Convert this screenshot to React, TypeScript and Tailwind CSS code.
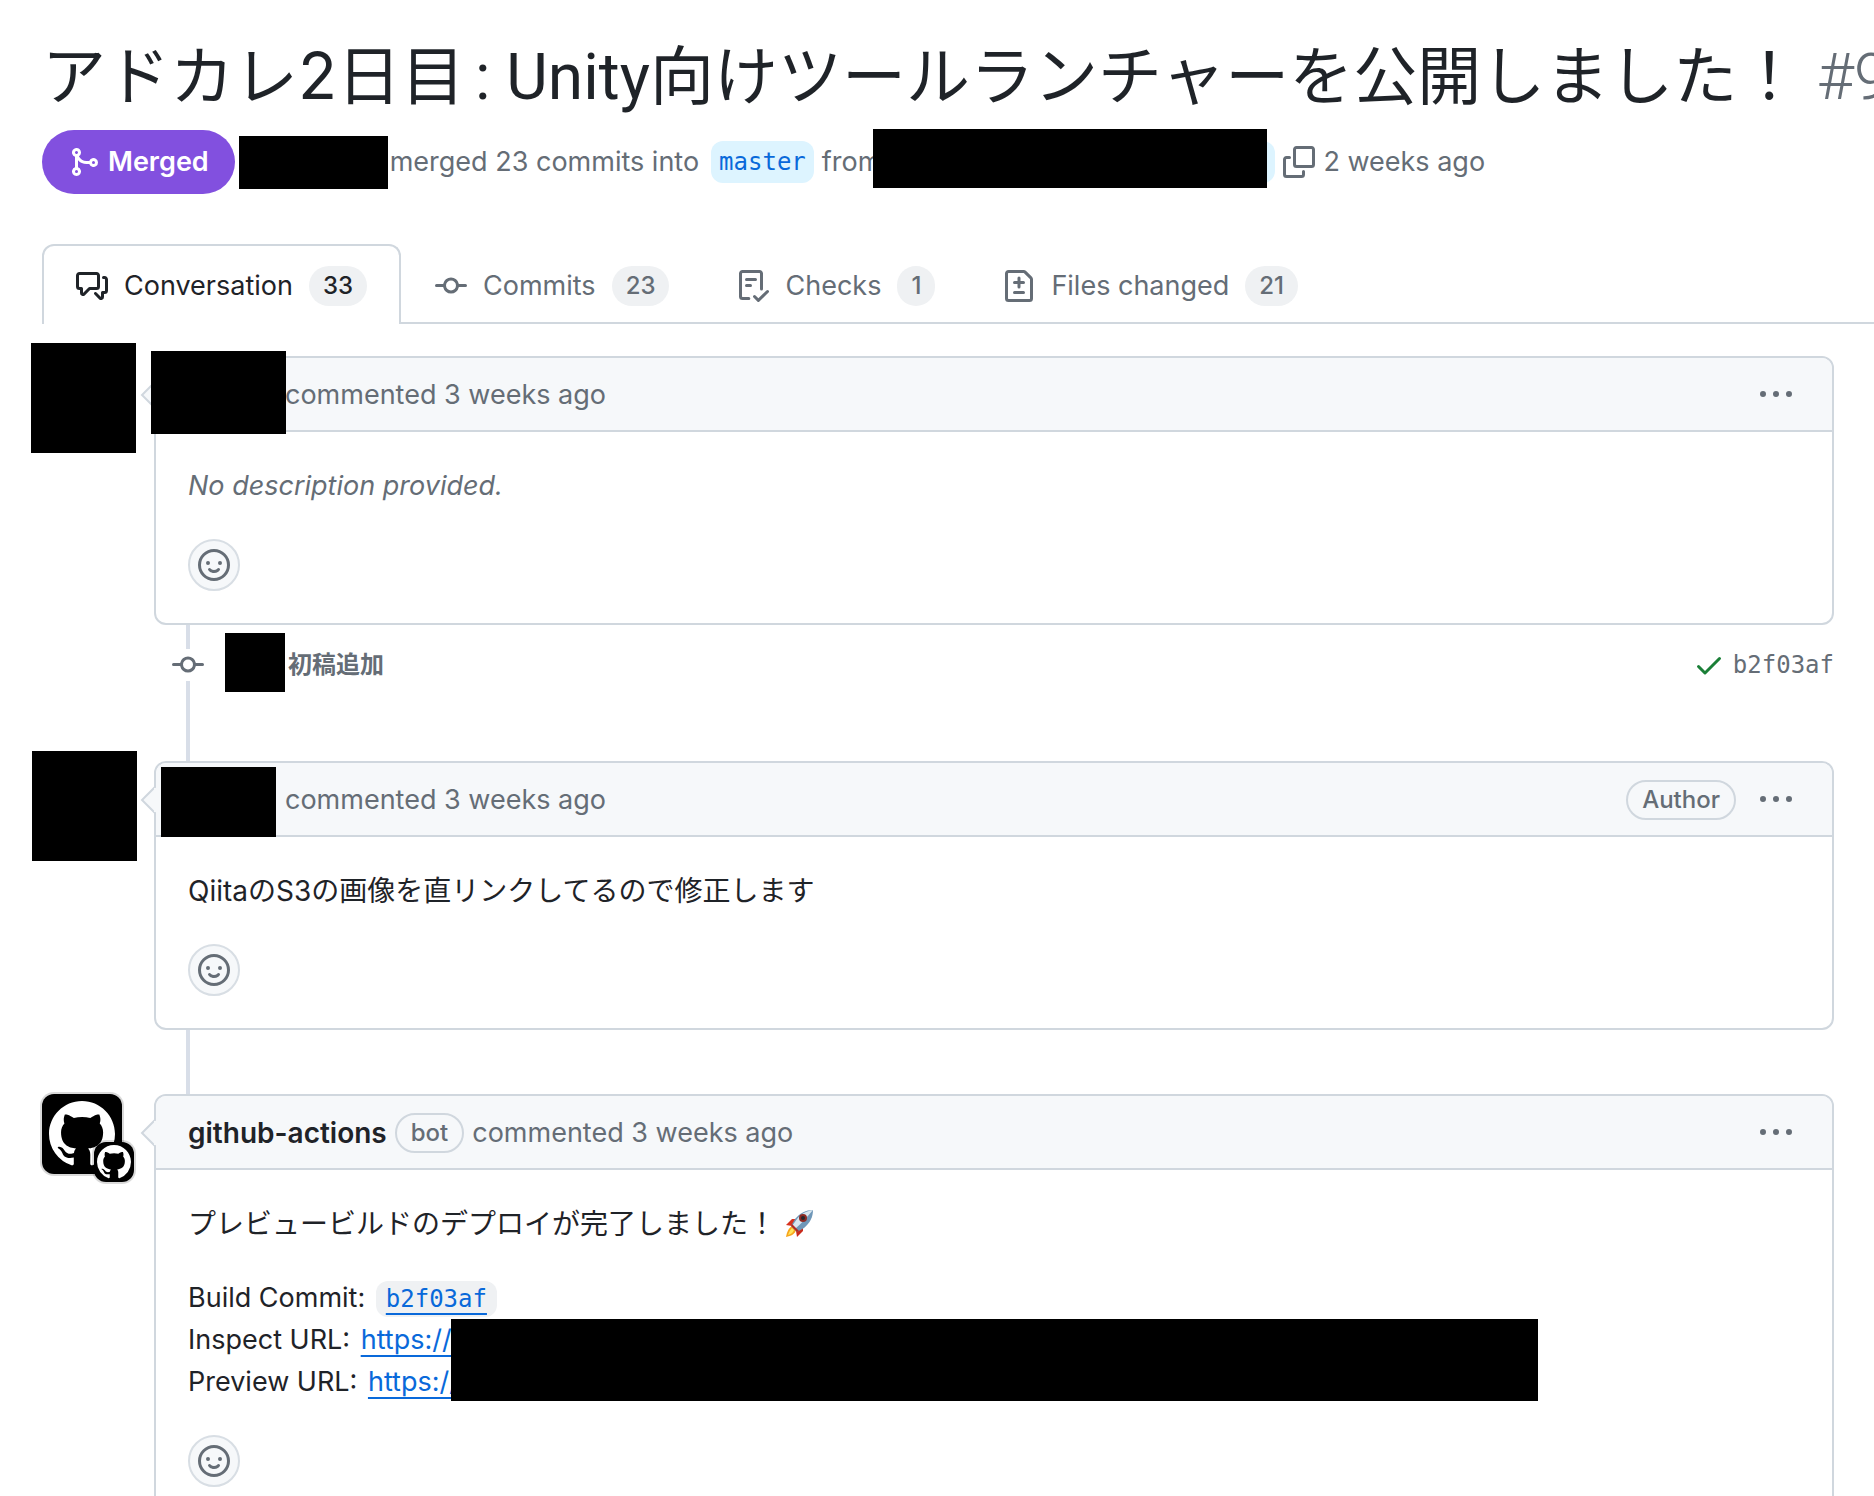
import type { ReactNode } from "react";

const PATHS = {
  merge:
    "M5.45 5.154A4.25 4.25 0 0 0 9.25 7.5h1.378a2.251 2.251 0 1 1 0 1.5H9.25A5.734 5.734 0 0 1 5 7.123v3.505a2.25 2.25 0 1 1-1.5 0V5.372a2.25 2.25 0 1 1 1.95-.218ZM4.25 13.5a.75.75 0 1 0 0-1.5.75.75 0 0 0 0 1.5Zm8.5-4.5a.75.75 0 1 0 0-1.5.75.75 0 0 0 0 1.5ZM5 3.25a.75.75 0 1 0 0 .005V3.25Z",
  discussion:
    "M1.75 1h8.5c.966 0 1.75.784 1.75 1.75v5.5A1.75 1.75 0 0 1 10.25 10H7.061l-2.574 2.573A1.458 1.458 0 0 1 2 11.543V10h-.25A1.75 1.75 0 0 1 0 8.25v-5.5C0 1.784.784 1 1.75 1ZM1.5 2.75v5.5c0 .138.112.25.25.25h1a.75.75 0 0 1 .75.75v2.19l2.72-2.72a.749.749 0 0 1 .53-.22h3.5a.25.25 0 0 0 .25-.25v-5.5a.25.25 0 0 0-.25-.25h-8.5a.25.25 0 0 0-.25.25Zm13 2a.25.25 0 0 0-.25-.25h-.5a.75.75 0 0 1 0-1.5h.5c.966 0 1.75.784 1.75 1.75v5.5A1.75 1.75 0 0 1 14.25 12H14v1.543a1.458 1.458 0 0 1-2.487 1.03L9.22 12.28a.749.749 0 0 1 .326-1.275.749.749 0 0 1 .734.215l2.22 2.22v-2.19a.75.75 0 0 1 .75-.75h1a.25.25 0 0 0 .25-.25Z",
  commit:
    "M11.93 8.5a4.002 4.002 0 0 1-7.86 0H.75a.75.75 0 0 1 0-1.5h3.32a4.002 4.002 0 0 1 7.86 0h3.32a.75.75 0 0 1 0 1.5Zm-1.43-.75a2.5 2.5 0 1 0-5 0 2.5 2.5 0 0 0 5 0Z",
  checklist:
    "M2.5 1.75v11.5c0 .138.112.25.25.25h3.17a.75.75 0 0 1 0 1.5H2.75A1.75 1.75 0 0 1 1 13.25V1.75C1 .784 1.784 0 2.75 0h8.5C12.216 0 13 .784 13 1.75v7.736a.75.75 0 0 1-1.5 0V1.75a.25.25 0 0 0-.25-.25h-8.5a.25.25 0 0 0-.25.25Zm13.274 9.537v-.001l-4.557 4.45a.75.75 0 0 1-1.055-.008l-1.943-1.95a.75.75 0 0 1 1.062-1.058l1.419 1.425 4.026-3.932a.75.75 0 1 1 1.048 1.074ZM4.75 4h4.5a.75.75 0 0 1 0 1.5h-4.5a.75.75 0 0 1 0-1.5ZM4 7.75A.75.75 0 0 1 4.75 7h2a.75.75 0 0 1 0 1.5h-2A.75.75 0 0 1 4 7.75Z",
  diff: "M1 1.75C1 .784 1.784 0 2.75 0h7.586c.464 0 .909.184 1.237.513l2.914 2.914c.329.328.513.773.513 1.237v9.586A1.75 1.75 0 0 1 13.25 16H2.75A1.75 1.75 0 0 1 1 14.25Zm1.75-.25a.25.25 0 0 0-.25.25v12.5c0 .138.112.25.25.25h10.5a.25.25 0 0 0 .25-.25V4.664a.25.25 0 0 0-.073-.177l-2.914-2.914a.25.25 0 0 0-.177-.073ZM8 3.25a.75.75 0 0 1 .75.75v1.5h1.5a.75.75 0 0 1 0 1.5h-1.5v1.5a.75.75 0 0 1-1.5 0V7h-1.5a.75.75 0 0 1 0-1.5h1.5V4A.75.75 0 0 1 8 3.25Zm-3 8a.75.75 0 0 1 .75-.75h4.5a.75.75 0 0 1 0 1.5h-4.5a.75.75 0 0 1-.75-.75Z",
  copy: "M0 6.75C0 5.784.784 5 1.75 5h1.5a.75.75 0 0 1 0 1.5h-1.5a.25.25 0 0 0-.25.25v7.5c0 .138.112.25.25.25h7.5a.25.25 0 0 0 .25-.25v-1.5a.75.75 0 0 1 1.5 0v1.5A1.75 1.75 0 0 1 9.25 16h-7.5A1.75 1.75 0 0 1 0 14.25ZM5 1.75C5 .784 5.784 0 6.75 0h7.5C15.216 0 16 .784 16 1.75v7.5A1.75 1.75 0 0 1 14.25 11h-7.5A1.75 1.75 0 0 1 5 9.25Zm1.75-.25a.25.25 0 0 0-.25.25v7.5c0 .138.112.25.25.25h7.5a.25.25 0 0 0 .25-.25v-7.5a.25.25 0 0 0-.25-.25Z",
  smiley:
    "M8 0a8 8 0 1 1 0 16A8 8 0 0 1 8 0ZM1.5 8a6.5 6.5 0 1 0 13 0 6.5 6.5 0 0 0-13 0Zm3.82 1.636a.75.75 0 0 1 1.038.175l.007.009c.103.118.22.222.35.31.264.178.683.37 1.285.37.602 0 1.02-.192 1.285-.371.13-.088.247-.192.35-.31l.007-.008a.75.75 0 0 1 1.222.87c-.06.08-.12.15-.184.213-.16.166-.338.316-.53.445-.63.418-1.37.638-2.127.629-.946 0-1.652-.308-2.126-.63a3.331 3.331 0 0 1-.735-.657.75.75 0 0 1 .183-1.044ZM12 7a1 1 0 1 1-2 0 1 1 0 0 1 2 0ZM5 8a1 1 0 1 1 0-2 1 1 0 0 1 0 2Z",
  kebab:
    "M8 9a1.5 1.5 0 1 0 0-3 1.5 1.5 0 0 0 0 3ZM1.5 9a1.5 1.5 0 1 0 0-3 1.5 1.5 0 0 0 0 3Zm13 0a1.5 1.5 0 1 0 0-3 1.5 1.5 0 0 0 0 3Z",
  check:
    "M13.78 4.22a.75.75 0 0 1 0 1.06l-7.25 7.25a.75.75 0 0 1-1.06 0L2.22 9.28a.751.751 0 0 1 .018-1.042.751.751 0 0 1 1.042-.018L6 10.94l6.72-6.72a.75.75 0 0 1 1.06 0Z",
  github:
    "M8 0c4.42 0 8 3.58 8 8a8.013 8.013 0 0 1-5.45 7.59c-.4.08-.55-.17-.55-.38 0-.27.01-1.13.01-2.2 0-.75-.25-1.23-.54-1.48 1.78-.2 3.65-.88 3.65-3.95 0-.88-.31-1.59-.82-2.15.08-.2.36-1.02-.08-2.12 0 0-.67-.22-2.2.82-.64-.18-1.32-.27-2-.27-.68 0-1.36.09-2 .27-1.53-1.03-2.2-.82-2.2-.82-.44 1.1-.16 1.92-.08 2.12-.51.56-.82 1.28-.82 2.15 0 3.06 1.86 3.75 3.64 3.95-.23.2-.44.55-.51 1.07-.46.21-1.61.55-2.33-.66-.15-.24-.6-.83-1.23-.82-.67.01-.27.38.01.53.34.19.73.9.82 1.13.16.45.68 1.31 2.69.94 0 .67.01 1.3.01 1.49 0 .21-.15.45-.55.38A7.995 7.995 0 0 1 0 8c0-4.42 3.58-8 8-8Z",
};

function Icon({ name, className = "size-8" }: { name: keyof typeof PATHS; className?: string }) {
  return (
    <svg viewBox="0 0 16 16" fill="currentColor" aria-hidden="true" className={`shrink-0 ${className}`}>
      <path d={PATHS[name]} />
    </svg>
  );
}

function Rocket() {
  return (
    <svg viewBox="0 0 30 30" role="img" aria-label="rocket" className="inline-block size-[30px] align-[-5px]">
      <path d="M2 16 8 10h5l-5 7Z" fill="#d8321f" />
      <path d="m13 28 6-6v-5l-7 5Z" fill="#c92a1c" />
      <path d="M8 17c-3 2-5 5-6 11 5-1 9-3 10-7Z" fill="#f7a51b" />
      <path d="M8 19c-2 2-3 4-4 7 4-1 5-3 6-5Z" fill="#ffe45c" />
      <path d="M29 1c-7 0-13 3-18 9l-4 7 6 6 7-4c6-5 9-11 9-18Z" fill="#6f97b8" />
      <path d="M29 1c-7 1-12 4-16 9l-5 7 3 3C17 15 22 9 29 1Z" fill="#d8e6f0" />
      <path d="m8 15 7 7-2 1-6-6Z" fill="#b32a20" />
      <circle cx="19" cy="9" r="4" fill="#8c2a24" />
      <circle cx="19" cy="9" r="2" fill="#26262c" />
    </svg>
  );
}

const tabs = [
  { icon: "discussion", label: "Conversation", count: 33, active: true },
  { icon: "commit", label: "Commits", count: 23, active: false },
  { icon: "checklist", label: "Checks", count: 1, active: false },
  { icon: "diff", label: "Files changed", count: 21, active: false },
] as const;

function Label({ children }: { children: ReactNode }) {
  return (
    <span className="flex h-10 items-center rounded-full border-2 border-[#d0d7de] px-3.5 text-[24px] font-medium">
      {children}
    </span>
  );
}

function Comment({
  avatar,
  author,
  badge,
  children,
}: {
  avatar: ReactNode;
  author: ReactNode;
  badge?: ReactNode;
  children: ReactNode;
}) {
  return (
    <article className="relative ml-28 rounded-xl border-2 border-[#d0d7de]">
      {avatar}
      <svg viewBox="0 0 16 32" aria-hidden="true" className="absolute top-[21px] -left-4 h-8 w-4">
        <path d="M16 2 2 16l14 14" fill="#f6f8fa" stroke="#d0d7de" strokeWidth="2" />
        <path d="M14 4h2v24h-2Z" fill="#f6f8fa" />
      </svg>
      <header className="flex h-[74px] items-center rounded-t-[10px] border-b-2 border-[#d0d7de] bg-[#f6f8fa] pt-0.5 pr-10 pl-8 text-[#656d76]">
        {author}
        <span>commented 3 weeks ago</span>
        <span className="ml-auto flex items-center gap-6">
          {badge}
          <button type="button" aria-label="Show options">
            <Icon name="kebab" />
          </button>
        </span>
      </header>
      <div className="px-8 pt-[33px] pb-8">
        {children}
        <button
          type="button"
          aria-label="Add reaction"
          className="mt-8 flex size-[52px] items-center justify-center rounded-full border-2 border-[#d8dee4] bg-[#f6f8fa] text-[#656d76]"
        >
          <Icon name="smiley" />
        </button>
      </div>
    </article>
  );
}

const link = "text-[#0969da] underline decoration-2 underline-offset-6";

export default function App() {
  return (
    <div className="h-screen overflow-hidden bg-white font-[Inter,'Noto_Sans_CJK_JP',sans-serif] text-[27px] leading-[42px] text-[#1f2328]">
      <h1 className="mt-9 ml-[42px] h-20 text-[64px] leading-[80px] whitespace-nowrap">
        アドカレ2日目<span className="-ml-1.5 font-[Roboto,sans-serif]"> : Unity</span>向けツールランチャーを公開しました！
        <span className="font-[Roboto,sans-serif] font-light text-[#656d76]"> #9</span>
      </h1>

      <div className="mt-3.5 ml-[42px] flex items-center whitespace-nowrap text-[#656d76]">
        <span className="flex h-16 items-center gap-2 rounded-full bg-[#8250df] px-[26px] font-semibold text-white">
          <Icon name="merge" />
          Merged
        </span>
        <span className="mr-0.5 ml-1 h-[53px] w-[149px] bg-black" />
        <span>merged 23 commits into</span>
        <a href="#master" className="mr-2 ml-3 rounded-xl bg-[#ddf4ff] px-2 font-['DejaVu_Sans_Mono',monospace] text-[24px] text-[#0969da]">
          master
        </a>
        <span>from</span>
        <span className="relative -ml-2 mr-2 h-[42px] w-[402px] rounded-xl bg-[#ddf4ff]">
          <span className="absolute -top-3 left-0 h-[59px] w-[394px] bg-black" />
        </span>
        <button type="button" aria-label="Copy branch name" className="mr-2">
          <Icon name="copy" />
        </button>
        <span>2 weeks ago</span>
      </div>

      <nav className="mt-[50px] flex h-20 whitespace-nowrap">
        <span className="w-[42px]" />
        {tabs.map((t) => (
          <a
            key={t.label}
            href="#tab"
            className={
              t.active
                ? "flex items-center gap-4 rounded-t-xl border-2 border-b-0 border-[#d0d7de] px-8 pt-0.5"
                : "flex items-center gap-4 border-b-2 border-[#d0d7de] px-[34px] pt-1.5 text-[#656d76]"
            }
          >
            <Icon name={t.icon} />
            {t.label}
            <span className="flex h-10 items-center rounded-full bg-[#eff1f3] px-3.5 text-[24px] font-medium">{t.count}</span>
          </a>
        ))}
        <span className="flex-1 border-b-2 border-[#d0d7de]" />
      </nav>

      <main className="mt-8 mr-10 ml-[42px]">
        <Comment
          avatar={<span className="absolute -top-[15px] -left-[125px] h-[110px] w-[105px] bg-black" />}
          author={
            <span className="w-[97px]">
              <span className="absolute -top-[7px] -left-[5px] z-10 h-[83px] w-[135px] bg-black" />
            </span>
          }
        >
          <p className="text-[#656d76] italic">No description provided.</p>
        </Comment>

        <div className="relative flex h-[136px] items-start pt-6">
          <span className="absolute top-0 left-36 h-full w-1 bg-[#d8dee8]" />
          <span className="relative ml-[130px] bg-white text-[#656d76]">
            <Icon name="commit" />
          </span>
          <span className="absolute top-2 left-[183px] h-[59px] w-[60px] bg-black" />
          <a href="#commit" className="ml-[84px] text-[24px] leading-8 font-semibold text-[#656d76]">
            初稿追加
          </a>
          <span className="ml-auto flex items-center gap-2 font-['DejaVu_Sans_Mono',monospace] text-[24px] leading-8 text-[#656d76]">
            <span className="text-[#1a7f37]">
              <Icon name="check" />
            </span>
            b2f03af
          </span>
        </div>

        <Comment
          avatar={<span className="absolute -top-3 -left-[124px] h-[110px] w-[105px] bg-black" />}
          author={
            <span className="w-[97px]">
              <span className="absolute top-1 left-[5px] z-10 h-[70px] w-[115px] bg-black" />
            </span>
          }
          badge={<Label>Author</Label>}
        >
          <p className="text-[28px]">QiitaのS3の画像を直リンクしてるので修正します</p>
        </Comment>

        <div className="ml-36 h-16 w-1 bg-[#d8dee8]" />

        <Comment
          avatar={
            <span className="absolute -top-0.5 -left-[114px] flex size-20 items-center justify-center rounded-xl bg-black text-white ring-2 ring-black/15">
              <Icon name="github" className="size-[66px]" />
              <span className="absolute top-12 left-[52px] flex size-10 items-center justify-center rounded-xl bg-black ring-2 ring-black/15">
                <Icon name="github" className="size-[34px]" />
              </span>
            </span>
          }
          author={
            <span className="mr-2 flex items-center gap-2">
              <strong className="text-[28px] font-semibold text-[#1f2328]">github-actions</strong>
              <Label>bot</Label>
            </span>
          }
        >
          <p className="text-[28px]">
            プレビュービルドのデプロイが完了しました！ <Rocket />
          </p>
          <div className="relative mt-8">
            <p>
              Build Commit:{" "}
              <code className="ml-[3px] rounded-xl bg-[#eff1f3] px-2.5 py-1 font-['DejaVu_Sans_Mono',monospace] text-[24px] leading-6">
                <a href="#commit" className={link}>
                  b2f03af
                </a>
              </code>
            </p>
            <p>
              Inspect URL:{" "}
              <a href="#inspect" className={`ml-[3px] ${link}`}>
                https://
              </a>
            </p>
            <p>
              Preview URL:{" "}
              <a href="#preview" className={`ml-[3px] ${link}`}>
                https://
              </a>
            </p>
            <span className="absolute top-[42px] left-[263px] h-[82px] w-[1087px] bg-black" />
          </div>
        </Comment>
      </main>
    </div>
  );
}
